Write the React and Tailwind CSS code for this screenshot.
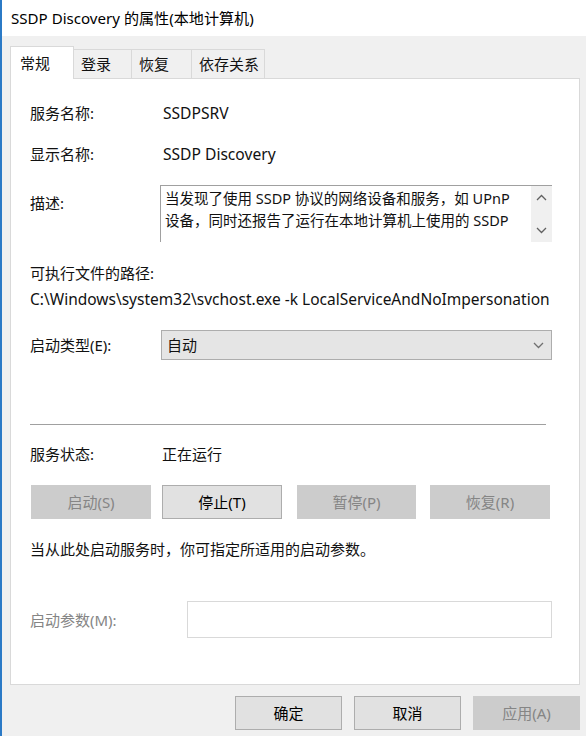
import React from "react";

const font = { fontFamily: '"Noto Sans", "Noto Sans CJK SC", sans-serif' };

function Chevron({ up, className }) {
  return (
    <svg width="11" height="7" viewBox="0 0 11 7" className={className}>
      <path
        d={up ? "M1 6 L5.5 1.5 L10 6" : "M1 1 L5.5 5.5 L10 1"}
        fill="none"
        stroke="currentColor"
        strokeWidth="1.3"
      />
    </svg>
  );
}

function Tab({ label, active, width }) {
  if (active) {
    return (
      <div className={`${width} h-[33px] -mb-px bg-white border border-[#d9d9d9] border-b-0 flex items-center pl-[9px] z-10 relative`}>
        {label}
      </div>
    );
  }
  return (
    <div className={`${width} h-[29px] bg-[#f0f0f0] border border-[#d9d9d9] border-l-0 border-b-0 flex items-center pl-[7px]`}>
      {label}
    </div>
  );
}

function Btn({ label, disabled, className }) {
  return (
    <div
      className={`h-[34px] flex items-center justify-center border ${
        disabled
          ? "bg-[#cccccc] border-[#cccccc] text-[#858585]"
          : "bg-[#e1e1e1] border-[#adadad] text-black"
      } ${className}`}
    >
      {label}
    </div>
  );
}

export default function App() {
  return (
    <div
      style={font}
      className="w-[586px] h-[736px] bg-[#f0f0f0] border-l-2 border-[#2b7ac6] text-[15px] leading-[22px] text-[#111111] overflow-hidden"
    >
      {/* title bar */}
      <div className="h-[36px] bg-white flex items-center pl-[9px] text-[15.1px] text-black">
        SSDP Discovery 的属性(本地计算机)
      </div>

      <div className="pl-[8px] pr-[6px] pt-[10px]">
        {/* tabs */}
        <div className="flex items-end h-[32px]">
          <Tab label="常规" active width="w-[64px]" />
          <Tab label="登录" width="w-[58px]" />
          <Tab label="恢复" width="w-[60px]" />
          <Tab label="依存关系" width="w-[73px]" />
        </div>

        {/* panel */}
        <div className="h-[607px] bg-white border border-[#d9d9d9] pl-[19px] pr-[27px] flex flex-col">
          <div className="flex items-center h-[22px] mt-[23px]">
            <span className="w-[133px]">服务名称:</span>
            <span className="text-[15.6px]">SSDPSRV</span>
          </div>
          <div className="flex items-center h-[22px] mt-[19px]">
            <span className="w-[133px]">显示名称:</span>
            <span className="text-[15.6px]">SSDP Discovery</span>
          </div>
          <div className="flex mt-[20px]">
            <span className="w-[130px] pt-[7px]">描述:</span>
            <div className="flex-1 h-[57px] border-t border-l border-[#a0a0a0] flex">
              <div className="flex-1 pl-[4px] pt-px text-[14.5px] whitespace-nowrap overflow-hidden">
                <div>当发现了使用 SSDP 协议的网络设备和服务，如 UPnP</div>
                <div>设备，同时还报告了运行在本地计算机上使用的 SSDP</div>
              </div>
              <div className="w-[21px] bg-[#f0f0f0] flex flex-col items-center justify-between pt-[8px] pb-[8px] text-[#606060]">
                <Chevron up />
                <Chevron />
              </div>
            </div>
          </div>
          <div className="h-[22px] flex items-center mt-[20px]">可执行文件的路径:</div>
          <div className="h-[22px] flex items-center mt-[4px] whitespace-nowrap text-[15.5px]">
            C:\Windows\system32\svchost.exe -k LocalServiceAndNoImpersonation
          </div>
          <div className="flex items-center mt-[20px]">
            <span className="w-[131px]">启动类型(E):</span>
            <div className="flex-1 h-[30px] bg-[#e5e5e5] border border-[#adadad] flex items-center justify-between pl-[5px] pr-[7px]">
              <span>自动</span>
              <Chevron className="text-[#707070]" />
            </div>
          </div>

          <div className="h-px bg-[#a0a0a0] mt-[64px] mr-[6px]" />

          <div className="flex items-center h-[22px] mt-[18px]">
            <span className="w-[132px]">服务状态:</span>
            <span>正在运行</span>
          </div>
          <div className="flex mt-[20px] pl-[1px]">
            <Btn label="启动(S)" disabled className="w-[120px]" />
            <Btn label="停止(T)" className="w-[120px] ml-[11px]" />
            <Btn label="暂停(P)" disabled className="w-[119px] ml-[15px]" />
            <Btn label="恢复(R)" disabled className="w-[120px] ml-[14px]" />
          </div>
          <div className="h-[22px] flex items-center mt-[19px]">
            当从此处启动服务时，你可指定所适用的启动参数。
          </div>
          <div className="flex items-center mt-[41px]">
            <span className="w-[157px] text-[#858585]">启动参数(M):</span>
            <div className="flex-1 h-[37px] bg-white border border-[#d9d9d9]" />
          </div>
        </div>

        {/* bottom buttons */}
        <div className="flex justify-end gap-[12px] mt-[11px]">
          <Btn label="确定" className="w-[107px]" />
          <Btn label="取消" className="w-[107px]" />
          <Btn label="应用(A)" disabled className="w-[107px]" />
        </div>
      </div>
    </div>
  );
}
